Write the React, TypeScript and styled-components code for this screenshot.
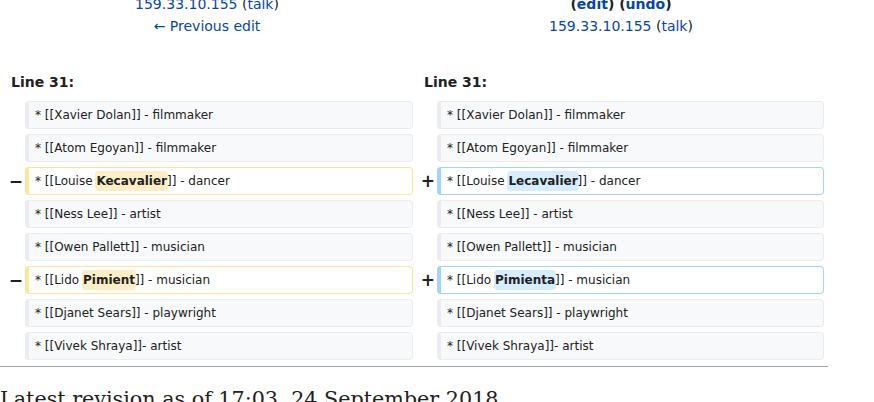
import React from 'react'
import styled, { createGlobalStyle } from 'styled-components'

const GlobalStyle = createGlobalStyle`
  html, body {
    margin: 0;
    padding: 0;
    background: #fff;
    overflow: hidden;
  }
  body {
    font-family: 'DejaVu Sans', 'Liberation Sans', sans-serif;
    color: #202122;
  }
`

type Kind = 'context' | 'deleted' | 'added'

interface Part {
  text: string
  change?: boolean
}

interface Row {
  left: Part[]
  right: Part[]
  changed?: boolean
}

const rows: Row[] = [
  { left: [{ text: '* [[Xavier Dolan]] - filmmaker' }], right: [{ text: '* [[Xavier Dolan]] - filmmaker' }] },
  { left: [{ text: '* [[Atom Egoyan]] - filmmaker' }], right: [{ text: '* [[Atom Egoyan]] - filmmaker' }] },
  {
    changed: true,
    left: [{ text: '* [[Louise ' }, { text: 'Kecavalier', change: true }, { text: ']] - dancer' }],
    right: [{ text: '* [[Louise ' }, { text: 'Lecavalier', change: true }, { text: ']] - dancer' }],
  },
  { left: [{ text: '* [[Ness Lee]] - artist' }], right: [{ text: '* [[Ness Lee]] - artist' }] },
  { left: [{ text: '* [[Owen Pallett]] - musician' }], right: [{ text: '* [[Owen Pallett]] - musician' }] },
  {
    changed: true,
    left: [{ text: '* [[Lido ' }, { text: 'Pimient', change: true }, { text: ']] - musician' }],
    right: [{ text: '* [[Lido ' }, { text: 'Pimienta', change: true }, { text: ']] - musician' }],
  },
  { left: [{ text: '* [[Djanet Sears]] - playwright' }], right: [{ text: '* [[Djanet Sears]] - playwright' }] },
  { left: [{ text: '* [[Vivek Shraya]]- artist' }], right: [{ text: '* [[Vivek Shraya]]- artist' }] },
]

const borderColor: Record<Kind, string> = {
  context: '#eaecf0',
  deleted: '#ffe49c',
  added: '#a3d3ff',
}

// the view is scrolled a little, so the first title line is cut at the top
const Page = styled.div`
  width: 828px;
  margin-top: -7px;
`

const Titles = styled.div`
  display: grid;
  grid-template-columns: 1fr 1fr;
  font-size: 14px;
  line-height: 22px;
  text-align: center;
`

const TitleCell = styled.div`
  display: flex;
  flex-direction: column;
`

const Link = styled.span`
  color: #0645ad;
`

const Bold = styled.span`
  font-weight: bold;
`

const DiffTable = styled.div`
  display: grid;
  grid-template-columns: 17px 388px 16px 387px;
  column-gap: 4px;
  row-gap: 5px;
  padding: 0 4px;
  margin-top: 35px;
`

const LineNo = styled.div`
  grid-column: span 2;
  font-size: 14px;
  font-weight: bold;
  padding: 0 0 4px 7px;
  line-height: 20px;
`

const Marker = styled.div`
  display: flex;
  align-items: center;
  justify-content: flex-end;
  font-size: 17px;
  font-weight: bold;
  line-height: 1;
  margin-right: -2px;
`

const Cell = styled.div<{ $kind: Kind }>`
  height: 28px;
  box-sizing: border-box;
  display: flex;
  align-items: center;
  padding: 0 6px;
  font-size: 12px;
  white-space: pre;
  border: 1px solid ${p => borderColor[p.$kind]};
  border-left-width: 4px;
  border-radius: 4px;
  background: ${p => (p.$kind === 'context' ? '#f8f9fa' : '#fff')};
`

const Change = styled.span<{ $kind: Kind }>`
  font-weight: bold;
  border-radius: 4px;
  padding: 3px 1px;
  margin: 0 -1px;
  background: ${p => (p.$kind === 'added' ? '#d8ecff' : '#feeec8')};
`

const Rule = styled.hr`
  border: 0;
  border-top: 1px solid #a2a9b1;
  margin: 6px 0 0;
  width: 828px;
`

const Heading = styled.h2`
  margin: 19px 0 0;
  font-family: 'DejaVu Serif', 'Liberation Serif', serif;
  font-weight: normal;
  font-size: 20.7px;
  line-height: 1.3;
  white-space: nowrap;
`

const Content: React.FC<{ parts: Part[]; kind: Kind }> = ({ parts, kind }) => (
  <Cell $kind={kind}>
    {parts.map((p, i) =>
      p.change ? (
        <Change key={i} $kind={kind}>{p.text}</Change>
      ) : (
        <span key={i}>{p.text}</span>
      )
    )}
  </Cell>
)

const App: React.FC = () => (
  <Page>
    <GlobalStyle />
    <Titles>
      <TitleCell>
        <div>
          <Link>159.33.10.155</Link> (<Link>talk</Link>)
        </div>
        <div>
          <Link>← Previous edit</Link>
        </div>
      </TitleCell>
      <TitleCell>
        <Bold>
          (<Link>edit</Link>) (<Link>undo</Link>)
        </Bold>
        <div>
          <Link>159.33.10.155</Link> (<Link>talk</Link>)
        </div>
      </TitleCell>
    </Titles>
    <DiffTable>
      <LineNo>Line 31:</LineNo>
      <LineNo>Line 31:</LineNo>
      {rows.map((r, i) => (
        <React.Fragment key={i}>
          <Marker>{r.changed ? '−' : ''}</Marker>
          <Content parts={r.left} kind={r.changed ? 'deleted' : 'context'} />
          <Marker>{r.changed ? '+' : ''}</Marker>
          <Content parts={r.right} kind={r.changed ? 'added' : 'context'} />
        </React.Fragment>
      ))}
    </DiffTable>
    <Rule />
    <Heading>Latest revision as of 17:03, 24 September 2018</Heading>
  </Page>
)

export default App
